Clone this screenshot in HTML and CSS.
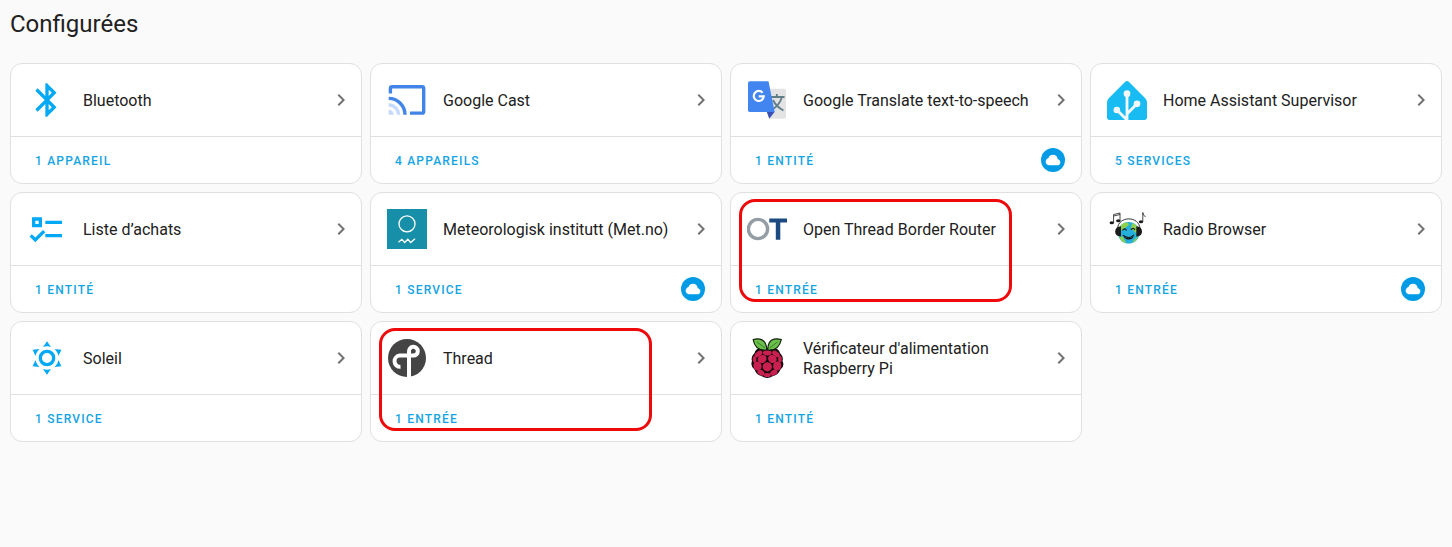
FILE: index.html
```html
<!DOCTYPE html>
<html lang="fr">

<head>
    <meta charset="UTF-8">
    <meta name="viewport" content="width=device-width, initial-scale=1.0">
    <title>Intégrations</title>
    <link rel="stylesheet" href="styles.css">
</head>

<body>

    <!-- shared icons -->
    <svg class="sprite" aria-hidden="true">
        <symbol id="chevron" viewBox="0 0 24 24">
            <path d="M8.59,16.58L13.17,12L8.59,7.41L10,6L16,12L10,18L8.59,16.58Z" />
        </symbol>
        <symbol id="cloud" viewBox="0 0 24 24">
            <path d="M6.5 20Q4.22 20 2.61 18.43 1 16.85 1 14.58 1 12.63 2.17 11.1 3.35 9.57 5.25 9.15 5.88 6.85 7.75 5.43 9.63 4 12 4 14.93 4 16.96 6.04 19 8.07 19 11 20.73 11.2 21.86 12.5 23 13.78 23 15.5 23 17.38 21.69 18.69 20.38 20 18.5 20Z" />
        </symbol>
    </svg>

    <main>
        <h1>Configurées</h1>
        <div class="grid">

            <div class="card">
                <a class="header" href="#">
                    <svg class="logo blue" viewBox="0 0 24 24">
                        <path d="M14.88,16.29L13,18.17V14.41M13,5.83L14.88,7.71L13,9.58M17.71,7.71L12,2H11V9.59L6.41,5L5,6.41L10.59,12L5,17.59L6.41,19L11,14.41V22H12L17.71,16.29L13.41,12L17.71,7.71Z" />
                    </svg>
                    <span class="name">Bluetooth</span>
                    <svg class="chevron"><use href="#chevron" /></svg>
                </a>
                <div class="footer">
                    <a href="#">1 appareil</a>
                </div>
            </div>

            <div class="card">
                <a class="header" href="#">
                    <svg class="logo" viewBox="0 0 40 40" fill="none" stroke="#4285e8" stroke-width="3.4">
                        <path d="M3.4 13.4V8.4Q3.4 6.7 5.1 6.7H35Q36.7 6.7 36.7 8.4V31.4Q36.7 33.1 35 33.1H23" />
                        <path d="M1.7 18.4A16.3 16.3 0 0 1 18 34.8" />
                        <path d="M1.7 25A9.8 9.8 0 0 1 11.5 34.8" stroke="#c6dafc" />
                        <path d="M1.7 34.8V29.8A5 5 0 0 1 6.7 34.8Z" fill="#c6dafc" stroke="none" />
                    </svg>
                    <span class="name">Google Cast</span>
                    <svg class="chevron"><use href="#chevron" /></svg>
                </a>
                <div class="footer">
                    <a href="#">4 appareils</a>
                </div>
            </div>

            <div class="card">
                <a class="header" href="#">
                    <svg class="logo" viewBox="0 0 40 40">
                        <path d="M16 8.7H37.2Q39 8.7 39 10.5V36.9Q39 38.7 37.2 38.7H22.3Z" fill="#e3e3e3" />
                        <path d="M22.5 17H37.5M29.8 14V17M35 17Q32 26 24.5 30M26 20Q29 26.5 36.5 30.5" fill="none" stroke="#607d88" stroke-width="1.8" />
                        <path d="M19.7 31.8H27.7L22.3 38.7Z" fill="#3a50b4" />
                        <path d="M2.8 1.3H21.5L27.7 32H2.8Q1 32 1 30.2V3.1Q1 1.3 2.8 1.3Z" fill="#4285f0" />
                        <path d="M15.6 12.7A5 5 0 1 0 16.8 16.3H11.7" fill="none" stroke="#fff" stroke-width="2.2" />
                    </svg>
                    <span class="name">Google Translate text-to-speech</span>
                    <svg class="chevron"><use href="#chevron" /></svg>
                </a>
                <div class="footer">
                    <a href="#">1 entité</a>
                    <span class="cloud"><svg><use href="#cloud" /></svg></span>
                </div>
            </div>

            <div class="card">
                <a class="header" href="#">
                    <svg class="logo" viewBox="0 0 240 240">
                        <path d="M240 224.8C240 233 233.3 239.8 225 239.8H15C6.8 239.8 0 233 0 224.8V134.8C0 126.5 4.8 115 10.6 109.2L109.4 10.4C115.2 4.5 124.8 4.5 130.6 10.4L229.4 109.2C235.2 115 240 126.5 240 134.8Z" fill="#18bcf2" />
                        <path d="M120 240V82M120 204L180 143M120 240L60 180" fill="none" stroke="#f2f8fc" stroke-width="17" />
                        <g fill="#f2f8fc">
                            <circle cx="120" cy="82" r="20" />
                            <circle cx="180" cy="143" r="20" />
                            <circle cx="59" cy="180" r="20" />
                        </g>
                    </svg>
                    <span class="name">Home Assistant Supervisor</span>
                    <svg class="chevron"><use href="#chevron" /></svg>
                </a>
                <div class="footer">
                    <a href="#">5 services</a>
                </div>
            </div>

            <div class="card">
                <a class="header" href="#">
                    <svg class="logo blue" viewBox="0 0 24 24">
                        <path d="M3,5H9V11H3V5M5,7V9H7V7H5M11,7H21V9H11V7M11,15H21V17H11V15M5,20L1.5,16.5L2.91,15.09L5,17.17L9.59,12.59L11,14L5,20Z" />
                    </svg>
                    <span class="name">Liste d’achats</span>
                    <svg class="chevron"><use href="#chevron" /></svg>
                </a>
                <div class="footer">
                    <a href="#">1 entité</a>
                </div>
            </div>

            <div class="card">
                <a class="header" href="#">
                    <svg class="logo" viewBox="0 0 40 40">
                        <rect width="40" height="40" fill="#188fa8" />
                        <g fill="none" stroke="#fff" stroke-width="1.3">
                            <circle cx="20" cy="14.9" r="8" />
                            <path d="M11.5 33.3L14.8 30.3L17.7 33.5L20.8 30.3L23.7 33.5L28 29.8" />
                        </g>
                    </svg>
                    <span class="name">Meteorologisk institutt (Met.no)</span>
                    <svg class="chevron"><use href="#chevron" /></svg>
                </a>
                <div class="footer">
                    <a href="#">1 service</a>
                    <span class="cloud"><svg><use href="#cloud" /></svg></span>
                </div>
            </div>

            <div class="card marked">
                <a class="header" href="#">
                    <svg class="logo" viewBox="0 0 40 40">
                        <circle cx="11" cy="20" r="9.6" fill="none" stroke="#939da3" stroke-width="3.4" />
                        <path d="M22.3 9.4H40V13.4H33.3V30.8H28.8V13.4H22.3Z" fill="#1b4a80" />
                    </svg>
                    <span class="name">Open Thread Border Router</span>
                    <svg class="chevron"><use href="#chevron" /></svg>
                </a>
                <div class="footer">
                    <a href="#">1 entrée</a>
                </div>
            </div>

            <div class="card">
                <a class="header" href="#">
                    <svg class="logo" viewBox="0 0 40 40">
                        <circle cx="21.7" cy="23.8" r="10.8" fill="#25b0dc" />
                        <path d="M14 16Q18 12.5 21 14L22 16L19 18L17 20L13 22ZM25 14Q31 16 32 21L30 25L27 22L24 19ZM12 27L16 28L19 34Q14 33 12 27ZM27 31L31 27Q30 32 25 34Z" fill="#8fd14a" />
                        <path d="M10.5 20C11 6.5 32.5 6.5 33 20" fill="none" stroke="#333" stroke-width="1" />
                        <path d="M15.5 21.3Q17.5 18.6 19.5 21.3M24 20.8Q26 18 28 20.8M16 26.3Q22 31 27 25.8" fill="none" stroke="#1a1a1a" stroke-width="1.2" />
                        <path d="M16.5 27.5Q22 31 26.8 27Q25.5 30.6 22 30.6Q18.2 30.6 16.5 27.5Z" fill="#111" />
                        <path d="M14 17.2V27.5C6.2 28 6.2 17.2 14 17.2ZM29.3 17.2V27.5C37 28 37 17.2 29.3 17.2Z" fill="#1c1c1c" />
                        <g fill="#1c1c1c">
                            <ellipse cx="4.8" cy="13.8" rx="2.2" ry="1.5" />
                            <ellipse cx="11.3" cy="11.8" rx="2.2" ry="1.5" />
                            <ellipse cx="34" cy="12.7" rx="2.2" ry="1.5" />
                        </g>
                        <path d="M6.6 13.8V5.5L13 4V11.8M6.6 7L13 5.5M35.8 12.7V3.5Q36 6 38.5 8" fill="none" stroke="#1c1c1c" stroke-width=".8" />
                    </svg>
                    <span class="name">Radio Browser</span>
                    <svg class="chevron"><use href="#chevron" /></svg>
                </a>
                <div class="footer">
                    <a href="#">1 entrée</a>
                    <span class="cloud"><svg><use href="#cloud" /></svg></span>
                </div>
            </div>

            <div class="card">
                <a class="header" href="#">
                    <svg class="logo blue" viewBox="0 0 24 24">
                        <path d="M12,7A5,5 0 0,1 17,12A5,5 0 0,1 12,17A5,5 0 0,1 7,12A5,5 0 0,1 12,7M12,9A3,3 0 0,0 9,12A3,3 0 0,0 12,15A3,3 0 0,0 15,12A3,3 0 0,0 12,9M12,2L14.39,5.42C13.65,5.15 12.84,5 12,5C11.16,5 10.35,5.15 9.61,5.42L12,2M3.34,7L7.5,6.65C6.9,7.16 6.36,7.78 5.94,8.5C5.5,9.24 5.25,10 5.11,10.79L3.34,7M3.36,17L5.12,13.23C5.26,14 5.53,14.78 5.95,15.5C6.37,16.24 6.91,16.86 7.5,17.37L3.36,17M20.65,7L18.88,10.79C18.74,10 18.47,9.23 18.05,8.5C17.63,7.78 17.1,7.15 16.5,6.64L20.65,7M20.64,17L16.5,17.36C17.09,16.85 17.62,16.22 18.04,15.5C18.46,14.77 18.73,14 18.87,13.21L20.64,17M12,22L9.59,18.56C10.33,18.83 11.14,19 12,19C12.82,19 13.63,18.83 14.37,18.56L12,22Z" />
                    </svg>
                    <span class="name">Soleil</span>
                    <svg class="chevron"><use href="#chevron" /></svg>
                </a>
                <div class="footer">
                    <a href="#">1 service</a>
                </div>
            </div>

            <div class="card marked">
                <a class="header" href="#">
                    <svg class="logo" viewBox="0 0 40 40">
                        <circle cx="20" cy="20" r="19" fill="#444" />
                        <path d="M22 39V13.5A4.4 4.4 0 1 1 26.4 17.6H12.8A5.6 5.6 0 0 0 13.5 28.8" fill="none" stroke="#fff" stroke-width="4" />
                    </svg>
                    <span class="name">Thread</span>
                    <svg class="chevron"><use href="#chevron" /></svg>
                </a>
                <div class="footer">
                    <a href="#">1 entrée</a>
                </div>
            </div>

            <div class="card">
                <a class="header" href="#">
                    <svg class="logo" viewBox="0 0 40 40">
                        <path d="M20 11Q31 8 33 15Q37 19 35.5 23Q38 28 33.5 31.5Q31 37 26 38Q20 42 14.5 38Q9.5 37 7.5 31.5Q3 28 5 23Q3.5 19 7.5 15Q9.5 8 20 11Z" fill="#150a0d" />
                        <path d="M19.8 12Q8 13 6.2 1.5Q10 .4 13 1.2Q19.5 2.5 19.8 12ZM20.6 12Q32 13 34.3 1.5Q30 .4 27 1.2Q21 2.5 20.6 12Z" fill="#6cc04a" stroke="#12200d" stroke-width="1.2" />
                        <path d="M10 4L18 10M30.5 4L22.5 10" stroke="#2c6e25" stroke-width=".8" />
                        <g fill="#c9204f">
                            <ellipse cx="20.3" cy="15" rx="4.4" ry="2.4" />
                            <ellipse cx="11.5" cy="16" rx="4.3" ry="2.5" transform="rotate(-35 11.5 16)" />
                            <ellipse cx="29" cy="16" rx="4.3" ry="2.5" transform="rotate(35 29 16)" />
                            <ellipse cx="15.2" cy="21" rx="4.5" ry="3.9" transform="rotate(-30 15.2 21)" />
                            <ellipse cx="25.4" cy="21" rx="4.5" ry="3.9" transform="rotate(30 25.4 21)" />
                            <ellipse cx="7.6" cy="21.3" rx="1.8" ry="3.4" />
                            <ellipse cx="33" cy="21.3" rx="1.8" ry="3.4" />
                            <circle cx="20.3" cy="28.8" r="4.6" />
                            <ellipse cx="10.5" cy="28" rx="4.1" ry="4.6" transform="rotate(-15 10.5 28)" />
                            <ellipse cx="30.2" cy="28" rx="4.1" ry="4.6" transform="rotate(15 30.2 28)" />
                            <ellipse cx="13.9" cy="34.6" rx="3.8" ry="2.6" transform="rotate(30 13.9 34.6)" />
                            <ellipse cx="26.8" cy="34.6" rx="3.8" ry="2.6" transform="rotate(-30 26.8 34.6)" />
                            <ellipse cx="20.3" cy="37" rx="3.6" ry="2" />
                        </g>
                    </svg>
                    <span class="name">Vérificateur d'alimentation Raspberry Pi</span>
                    <svg class="chevron"><use href="#chevron" /></svg>
                </a>
                <div class="footer">
                    <a href="#">1 entité</a>
                </div>
            </div>

        </div>
    </main>

</body>

</html>
```
FILE: styles.css
```css
*,
*::after {
    margin: 0;
    padding: 0;
    box-sizing: border-box;
}

body {
    background-color: #fafafa;
    color: #212121;
    font-family: Roboto, "Noto Sans", sans-serif;
    font-size: 16px;
    line-height: 20px;
}

a {
    color: inherit;
    text-decoration: none;
}

.sprite {
    display: none;
}

main {
    padding: 8px 10px;
}

h1 {
    font-size: 24px;
    font-weight: 400;
    line-height: 32px;
    margin-bottom: 23px;
}

.grid {
    display: grid;
    grid-template-columns: repeat(auto-fill, minmax(300px, 1fr));
    gap: 8px;
}

.card {
    position: relative;
    display: flex;
    flex-direction: column;
    background-color: #fff;
    border: 1px solid #e0e0e0;
    border-radius: 12px;
}

.header {
    display: flex;
    align-items: center;
    gap: 16px;
    min-height: 72px;
    padding: 14px 8px 14px 16px;
}

.logo {
    flex: none;
    width: 40px;
    height: 40px;
}

.blue {
    fill: #03a9f4;
}

.name {
    flex: 1;
    padding-top: 2px;
}

.chevron {
    flex: none;
    width: 24px;
    height: 24px;
    fill: #727272;
}

.footer {
    display: flex;
    align-items: center;
    justify-content: space-between;
    min-height: 47px;
    padding: 0 16px 0 24px;
    border-top: 1px solid #e0e0e0;
}

.footer a {
    padding-top: 2px;
    color: #13a4e4;
    font-size: 12px;
    font-weight: 500;
    letter-spacing: 0.1em;
    text-transform: uppercase;
}

.cloud {
    display: flex;
    align-items: center;
    justify-content: center;
    width: 24px;
    height: 24px;
    border-radius: 50%;
    background-color: #039be5;
}

.cloud svg {
    width: 16px;
    height: 16px;
    fill: #fff;
}

/* red frame drawn over the card */
.marked::after {
    content: "";
    position: absolute;
    top: 6px;
    left: 8px;
    width: 273px;
    height: 103px;
    border: 3px solid #ee0a0a;
    border-radius: 16px;
    pointer-events: none;
}
```
